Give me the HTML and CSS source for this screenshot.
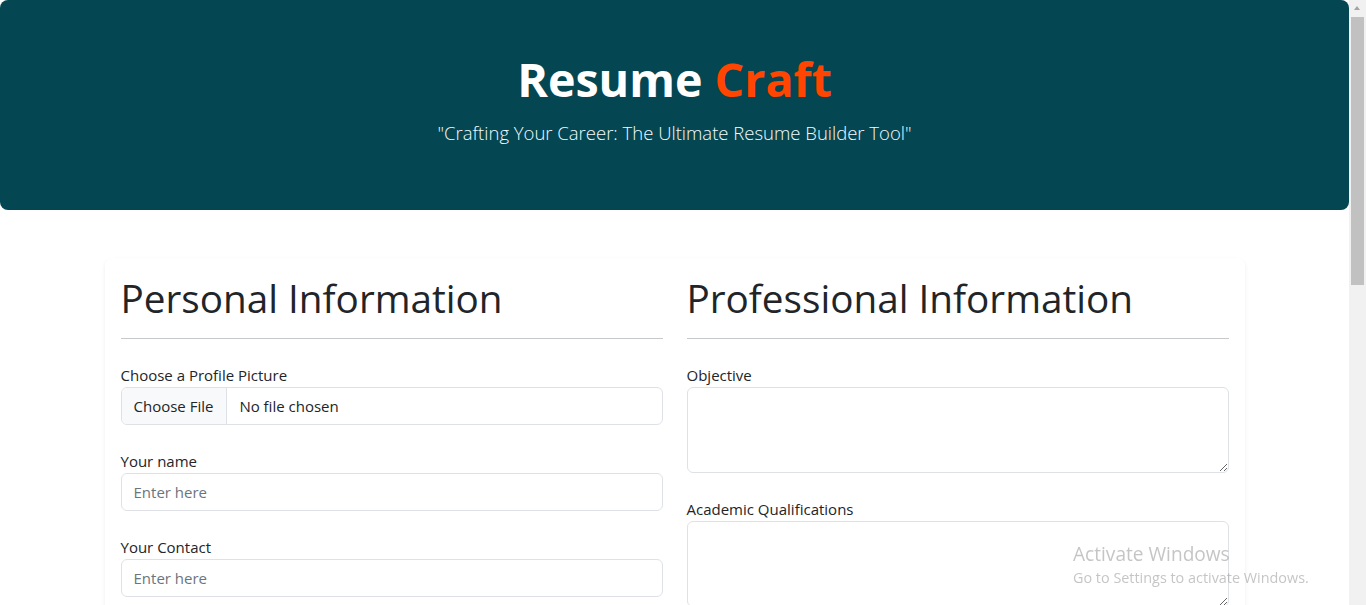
FILE: index.html
```html
<!DOCTYPE html>
<html lang="en">
<head>
<meta charset="utf-8">
<title>Resume Craft</title>
<link rel="stylesheet" href="styles.css">
</head>
<body>
<div class="page">
  <header class="hero">
    <h1 class="brand">Resume <span class="brand-accent">Craft</span></h1>
    <p class="tagline">"Crafting Your Career: The Ultimate Resume Builder Tool"</p>
  </header>

  <main class="container">
    <section class="card">
      <div class="columns">
        <div class="column">
          <h2 class="section-title">Personal Information</h2>
          <hr class="divider">
          <div class="fields">
            <div class="field">
              <label class="field-label" for="pic">Choose a Profile Picture</label>
              <input class="control file-control" id="pic" type="file">
            </div>
            <div class="field">
              <label class="field-label" for="name">Your name</label>
              <input class="control" id="name" type="text" placeholder="Enter here">
            </div>
            <div class="field">
              <label class="field-label" for="contact">Your Contact</label>
              <input class="control" id="contact" type="text" placeholder="Enter here">
            </div>
          </div>
        </div>
        <div class="column">
          <h2 class="section-title">Professional Information</h2>
          <hr class="divider">
          <div class="fields">
            <div class="field">
              <label class="field-label" for="obj">Objective</label>
              <textarea class="control text-area" id="obj" rows="3"></textarea>
            </div>
            <div class="field">
              <label class="field-label" for="acad">Academic Qualifications</label>
              <textarea class="control text-area" id="acad" rows="3"></textarea>
            </div>
          </div>
        </div>
      </div>
    </section>
  </main>
</div>

<div class="watermark">
  <div class="watermark-title">Activate Windows</div>
  <div class="watermark-sub">Go to Settings to activate Windows.</div>
</div>

<div class="scrollbar">
  <div class="scroll-arrow"></div>
  <div class="scroll-thumb"></div>
</div>
</body>
</html>
```

FILE: styles.css
```css
html {
  overflow: hidden;
}

body {
  margin: 0;
  font-family: "Open Sans", "Noto Sans", sans-serif;
  font-size: 15px;
  line-height: 24px;
  color: #212529;
  background: #fff;
}

.page {
  width: calc(100vw - 17px);
}

.hero {
  box-sizing: border-box;
  height: 210px;
  padding-top: 48px;
  background: #044652;
  border-radius: 8px;
  text-align: center;
}

.brand {
  margin: 0 0 8px;
  font-size: 46.6px;
  line-height: 62px;
  font-weight: 700;
  color: #fff;
}

.brand-accent {
  color: #ff4500;
}

.tagline {
  margin: 0;
  font-size: 18.5px;
  line-height: 30px;
  font-weight: 300;
  color: #f2fbff;
}

.container {
  width: 1140px;
  margin: 48px auto 0;
}

.card {
  padding: 16px;
  background: #fff;
  border-radius: 8px;
  box-shadow: 0 2px 4px rgba(0, 0, 0, 0.075);
}

.columns {
  display: grid;
  grid-template-columns: 1fr 1fr;
  column-gap: 24px;
}

.section-title {
  margin: 0;
  font-size: 38.7px;
  line-height: 48px;
  font-weight: 500;
  color: #212529;
}

.divider {
  margin: 16px 0 24px;
  border: 0;
  border-top: 1px solid rgba(33, 37, 41, 0.25);
}

.fields {
  display: flex;
  flex-direction: column;
  gap: 24px;
}

.field {
  display: flex;
  flex-direction: column;
}

.field-label {
  line-height: 24px;
}

.control {
  box-sizing: border-box;
  width: 100%;
  height: 38px;
  margin: 0;
  padding: 6px 12px;
  font-family: inherit;
  font-size: 15px;
  line-height: 24px;
  color: #212529;
  background: #fff;
  border: 1px solid #dee2e6;
  border-radius: 6px;
  outline: none;
}

.control::placeholder {
  color: #6c757d;
}

.file-control {
  padding: 0 12px 0 0;
  overflow: hidden;
}

.file-control::file-selector-button {
  height: 36px;
  margin: 0 12px 0 0;
  padding: 0 13px 0 12px;
  font-family: inherit;
  font-size: 15px;
  color: #212529;
  background: #f8f9fa;
  border: 0;
  border-right: 1px solid #dee2e6;
  border-radius: 0;
}

.text-area {
  height: 86px;
  resize: vertical;
}

.watermark {
  position: fixed;
  left: 1073px;
  top: 541px;
  color: rgba(150, 150, 150, 0.55);
  font-family: "Open Sans", sans-serif;
  white-space: nowrap;
}

.watermark-title {
  font-size: 19.1px;
  line-height: 26px;
}

.watermark-sub {
  font-size: 14.4px;
  line-height: 22px;
}

.scrollbar {
  position: fixed;
  top: 0;
  right: 0;
  width: 17px;
  height: 100vh;
  background: #f1f1f1;
}

.scroll-arrow {
  position: absolute;
  top: 6px;
  left: 5px;
  width: 0;
  height: 0;
  border-left: 3.5px solid transparent;
  border-right: 3.5px solid transparent;
  border-bottom: 4px solid #a3a3a3;
}

.scroll-thumb {
  position: absolute;
  top: 17px;
  left: 2px;
  width: 13px;
  height: 268px;
  background: #c1c1c1;
}
```
